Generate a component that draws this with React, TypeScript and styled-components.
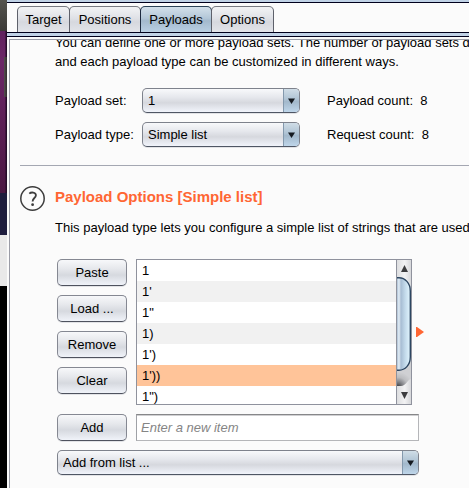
import React, { useRef, useState } from "react";
import styled, { createGlobalStyle } from "styled-components";

const font = `"Liberation Sans", Arial, sans-serif`;

const GlobalStyle = createGlobalStyle`
  *, *::before, *::after { box-sizing: border-box; }
  html, body { margin: 0; height: 100%; overflow: hidden; }
  body { font-family: ${font}; font-size: 13px; line-height: 20px; color: #000; background: #fbfbfb; }
  button, input, select { font: inherit; color: inherit; margin: 0; }
  ul, p, h2 { margin: 0; padding: 0; }
`;

const Page = styled.div`
  display: flex;
  height: 100vh;
  overflow: hidden;
`;

const Desktop = styled.div`
  flex: 0 0 7px;
  display: flex;
  flex-direction: column;
`;

const Strip = styled.div<{ $fill: string; $height?: number }>`
  background: ${(p) => p.$fill};
  ${(p) => (p.$height ? `flex: 0 0 ${p.$height}px;` : "flex: 1;")}
`;

const Edge = styled(Strip)`
  width: 3px;
  align-self: flex-end;
`;

const PurpleStrip = styled.div`
  flex: 0 0 162px;
  display: flex;
  flex-direction: column;
  padding-top: 26px;
  background: linear-gradient(90deg, transparent 5px, #240b28 6px), linear-gradient(#60235e, #6b2767 30px, #4a1742);
`;

const AppWindow = styled.div`
  flex: 1;
  min-width: 0;
  display: flex;
  flex-direction: column;
  border-top: 2px solid #c0d2e6;
`;

const TabBar = styled.nav`
  display: flex;
  flex: none;
  height: 31px;
  padding: 3px 0 0 10px;
  border-top: 1px solid #00001c;
  border-bottom: 1px solid #00001c;
`;

const Tab = styled.button<{ $width: number; $active?: boolean }>`
  width: ${(p) => p.$width}px;
  margin-right: -1px;
  padding: 0;
  border: 1px solid ${(p) => (p.$active ? "#1d2b40" : "#5e616b")};
  border-top-color: ${(p) => (p.$active ? "#2b4256" : "#777a82")};
  border-bottom: 0;
  border-radius: 5px 5px 0 0;
  background: ${(p) =>
    p.$active
      ? "linear-gradient(#d3e0ea, #b3c7d8 45%, #a3b9cd 55%, #b9cfe3)"
      : "linear-gradient(#f2f3f5, #dfe1e6 45%, #d6d8de 60%, #e2e4e9)"};
`;

const TabSeam = styled.div`
  flex: none;
  height: 4px;
  background: #c0d2e6;
  border-bottom: 1px solid #00001c;
`;

const Pane = styled.main`
  flex: 1;
  min-height: 0;
  margin: 2px 0 0 2px;
  border: solid #9a9ca6;
  border-width: 1px 0 0 1px;
  overflow: hidden;
`;

const Scrolled = styled.div`
  margin-top: -7px;
  white-space: nowrap;
`;

const Intro = styled.p`
  padding-left: 45px;
  line-height: 19px;
`;

const SetGrid = styled.div`
  display: grid;
  grid-template-columns: 87px 158px auto;
  align-items: center;
  row-gap: 9px;
  padding: 17px 0 0 45px;
`;

const Count = styled.span`
  padding-left: 27px;
  white-space: pre;
`;

const ComboBox = styled.div`
  position: relative;
  height: 25px;
  border: 1px solid #7e828c;
  border-bottom-color: #4f5664;
  border-radius: 5px;
  overflow: hidden;
  background: linear-gradient(#f8f9fb, #e6e8ed 35%, #d6d8de 60%, #f1f4fb);
  box-shadow: 0 1px 0 #e2e3e6;
`;

const Select = styled.select`
  display: block;
  width: 100%;
  height: 23px;
  padding: 0 22px 0 5px;
  border: 0;
  appearance: none;
  background: transparent;
`;

const ComboArrow = styled.span`
  position: absolute;
  inset: 0 0 0 auto;
  width: 16px;
  display: grid;
  place-items: center;
  pointer-events: none;
  border-left: 1px solid #8499ad;
  background: linear-gradient(#d0dde7, #afc3d4 45%, #a2b8cb 55%, #bfd6ea);
`;

const Rule = styled.hr`
  height: 1px;
  margin: 18px 0 20px 10px;
  border: 0;
  background: #a4a7b2;
`;

const SectionHead = styled.div`
  display: flex;
  align-items: flex-start;
  gap: 10px;
  padding-left: 10px;
`;

const HelpButton = styled.button`
  flex: none;
  display: block;
  width: 25px;
  height: 26px;
  padding: 0;
  border: 0;
  background: none;
`;

const Title = styled.h2`
  font-size: 15px;
  line-height: 22px;
  color: #ff6633;
`;

const Description = styled.p`
  padding: 6px 0 0 45px;
`;

const Editor = styled.div`
  display: grid;
  grid-template-columns: 70px 276px auto;
  column-gap: 9px;
  padding: 21px 0 0 47px;
`;

const ButtonColumn = styled.div`
  display: flex;
  flex-direction: column;
  gap: 9px;
`;

const PushButton = styled.button`
  height: 27px;
  padding: 0;
  border: 1px solid #858892;
  border-bottom-color: #4e525e;
  border-radius: 5px;
  background: linear-gradient(#f7f8fa, #e6e8ec 35%, #d6d9df 60%, #f0f3f9);
  box-shadow: 0 1px 0 #e2e3e6;
`;

const ListFrame = styled.div`
  display: flex;
  height: 146px;
  border: 1px solid #8f929d;
  background: #fff;
`;

const PayloadList = styled.ul`
  flex: 1;
  overflow: hidden;
  list-style: none;
`;

const PayloadItem = styled.li<{ $selected: boolean }>`
  height: 21px;
  padding-left: 5px;
  line-height: 21px;
  cursor: default;
  background: #fff;
  &:nth-child(even) { background: #f1f1f1; }
  && { ${(p) => p.$selected && "background: #ffc499;"} }
`;

const ScrollBar = styled.div`
  width: 15px;
  display: flex;
  flex-direction: column;
  border-left: 1px solid #8f929d;
  background: linear-gradient(90deg, #dddee0, #f2f2f3 55%, #d6d7da);
`;

const ScrollArrow = styled.button`
  flex: none;
  height: 17px;
  padding: 0;
  border: 0;
  display: grid;
  place-items: center;
  background: transparent;
`;

const Track = styled.svg`
  display: block;
  flex: 1;
  width: 14px;
  min-height: 0;
`;

const Marker = styled.svg`
  align-self: center;
  margin-left: -5px;
`;

const AddRow = styled.div`
  display: grid;
  grid-template-columns: 70px 283px;
  gap: 9px;
  padding: 9px 0 0 47px;
`;

const NewItem = styled.input`
  height: 27px;
  padding: 0 4px;
  border: 1px solid #b5b6b9;
  border-top: 1px solid #868789;
  border-left-color: #9fa1a6;
  border-radius: 0;
  outline: 0;
  background: #fff;
  box-shadow: inset 0 1px 0 #d0d0d2;
  &::placeholder { color: #858585; font-style: italic; opacity: 1; }
`;

const FromList = styled(ComboBox)`
  grid-column: 1 / -1;
`;

const DownArrow = () => (
  <svg width="7" height="6" viewBox="0 0 7 6" aria-hidden="true">
    <path d="M0 0.5H7L3.5 6Z" fill="#151a20" />
  </svg>
);

const items = ["1", "1'", '1"', "1)", "1')", "1'))", '1")'];

export default function App() {
  const list = useRef<HTMLUListElement>(null);
  const [selected, setSelected] = useState(5);
  const scroll = (by: number) => list.current?.scrollBy(0, by);

  return (
    <Page>
      <GlobalStyle />
      <Desktop>
        <Strip $fill="linear-gradient(#55544e, #3b3a36)" $height={31} />
        <PurpleStrip>
          <Edge $fill="linear-gradient(90deg, #55504f, #302c2e)" $height={40} />
        </PurpleStrip>
        <Strip $fill="#1e1d3e" $height={42} />
        <Strip $fill="#e9e9e9" $height={51} />
        <Strip $fill="#000" />
      </Desktop>
      <AppWindow>
        <TabBar>
          <Tab $width={53}>Target</Tab>
          <Tab $width={72}>Positions</Tab>
          <Tab $width={72} $active>Payloads</Tab>
          <Tab $width={63}>Options</Tab>
        </TabBar>
        <TabSeam />
        <Pane>
          <Scrolled>
            <Intro>
              You can define one or more payload sets. The number of payload sets depends
              <br />
              and each payload type can be customized in different ways.
            </Intro>
            <SetGrid>
              <label htmlFor="set">Payload set:</label>
              <ComboBox>
                <Select id="set"><option>1</option></Select>
                <ComboArrow><DownArrow /></ComboArrow>
              </ComboBox>
              <Count>Payload count:  8</Count>
              <label htmlFor="type">Payload type:</label>
              <ComboBox>
                <Select id="type"><option>Simple list</option></Select>
                <ComboArrow><DownArrow /></ComboArrow>
              </ComboBox>
              <Count>Request count:  8</Count>
            </SetGrid>
            <Rule />
            <SectionHead>
              <HelpButton aria-label="Help">
                <svg width="25" height="26" viewBox="0 0 25 26" fill="none" stroke="#3c3c3c">
                  <circle cx="12.5" cy="12.5" r="11.7" strokeWidth="1.5" />
                  <path d="M9.3 7.6C11 6 15.9 5.9 15.9 9.3C15.9 12 12.6 12.1 12.6 15.4" strokeWidth="1.8" />
                  <circle cx="12.6" cy="18.7" r="1.4" fill="#3c3c3c" stroke="none" />
                </svg>
              </HelpButton>
              <Title>Payload Options [Simple list]</Title>
            </SectionHead>
            <Description>
              This payload type lets you configure a simple list of strings that are used
            </Description>
            <Editor>
              <ButtonColumn>
                <PushButton>Paste</PushButton>
                <PushButton>Load ...</PushButton>
                <PushButton>Remove</PushButton>
                <PushButton>Clear</PushButton>
              </ButtonColumn>
              <ListFrame>
                <PayloadList ref={list} role="listbox" aria-label="Payloads">
                  {items.map((item, i) => (
                    <PayloadItem
                      key={item}
                      role="option"
                      aria-selected={i === selected}
                      $selected={i === selected}
                      onClick={() => setSelected(i)}
                    >
                      {item}
                    </PayloadItem>
                  ))}
                </PayloadList>
                <ScrollBar>
                  <ScrollArrow aria-label="Scroll up" onClick={() => scroll(-21)}>
                    <svg width="7" height="7" viewBox="0 0 7 7"><path d="M3.5 0L7 7H0Z" fill="#3c3c3e" /></svg>
                  </ScrollArrow>
                  <Track viewBox="0 0 14 110" preserveAspectRatio="none" aria-hidden="true">
                    <defs>
                      <linearGradient id="thumb">
                        <stop offset="0" stopColor="#a9bed3" />
                        <stop offset="0.14" stopColor="#e4eef6" />
                        <stop offset="0.3" stopColor="#a7bdd3" />
                        <stop offset="0.6" stopColor="#c2d9ea" />
                        <stop offset="1" stopColor="#e2f6ff" />
                      </linearGradient>
                      <radialGradient id="shade" gradientUnits="userSpaceOnUse" cx="1" cy="110" r="15">
                        <stop offset="0" stopColor="#3a3b3e" />
                        <stop offset="0.35" stopColor="#85868a" />
                        <stop offset="0.65" stopColor="#bcbdc0" />
                        <stop offset="1" stopColor="#cfd0d3" />
                      </radialGradient>
                    </defs>
                    <path d="M0 84H14V102C10 103 9 109 4 109H0Z" fill="url(#shade)" />
                    <path d="M0 0.8H2C8 0.8 13.3 6 13.3 14V80C13.3 88 8 93.2 2 93.2H0Z" fill="url(#thumb)" />
                    <path d="M0 0.8H2C8 0.8 13.3 6 13.3 14V80C13.3 88 8 93.2 2 93.2H0" fill="none" stroke="#2d4661" strokeWidth="1.4" />
                  </Track>
                  <ScrollArrow aria-label="Scroll down" onClick={() => scroll(21)}>
                    <svg width="7" height="7" viewBox="0 0 7 7"><path d="M0 0H7L3.5 7Z" fill="#3c3c3e" /></svg>
                  </ScrollArrow>
                </ScrollBar>
              </ListFrame>
              <Marker width="8" height="10" viewBox="0 0 8 10" aria-hidden="true">
                <path d="M0 0H1L8 5L1 10H0Z" fill="#ff6633" />
              </Marker>
            </Editor>
            <AddRow>
              <PushButton>Add</PushButton>
              <NewItem placeholder="Enter a new item" aria-label="New item" />
              <FromList>
                <Select aria-label="Add from list"><option>Add from list ...</option></Select>
                <ComboArrow><DownArrow /></ComboArrow>
              </FromList>
            </AddRow>
          </Scrolled>
        </Pane>
      </AppWindow>
    </Page>
  );
}
